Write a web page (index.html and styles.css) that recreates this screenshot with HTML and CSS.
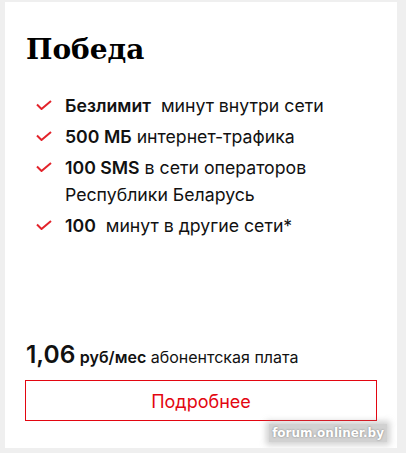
FILE: index.html
```html
<!DOCTYPE html>
<html lang="ru">
<head>
    <meta charset="UTF-8">
    <title>Победа</title>
    <link rel="stylesheet" href="styles.css">
</head>
<body>
    <div class="card">
        <h1>Победа</h1>

        <ul class="features">
            <li><svg class="check" viewBox="0 0 16 10"><path d="M1 4.5 L5.5 9 L15 1" /></svg><span><b>Безлимит</b>&nbsp; минут внутри сети</span></li>
            <li><svg class="check" viewBox="0 0 16 10"><path d="M1 4.5 L5.5 9 L15 1" /></svg><span><b>500 МБ</b> интернет-трафика</span></li>
            <li><svg class="check" viewBox="0 0 16 10"><path d="M1 4.5 L5.5 9 L15 1" /></svg><span><b>100 SMS</b> в сети операторов Республики Беларусь</span></li>
            <li><svg class="check" viewBox="0 0 16 10"><path d="M1 4.5 L5.5 9 L15 1" /></svg><span><b>100</b>&nbsp; минут в другие сети*</span></li>
        </ul>

        <div class="price">
            <span class="amount">1,06</span> <b>руб/мес</b> абонентская плата
        </div>
        <a class="more" href="#">Подробнее</a>

        <div class="watermark">forum.onliner.by</div>
    </div>
</body>
</html>
```

FILE: styles.css
```css
body {
    margin: 0;
    background: #efefef;
    font-family: Inter, "Noto Sans", sans-serif;
    color: #111;
}
.card {
    position: relative;
    box-sizing: border-box;
    width: 392px;
    height: 446px;
    margin: 2px 0 0 5px;
    background: #fff;
    padding: 28px 20px 0 20px;
    display: flex;
    flex-direction: column;
}
h1 {
    margin: 0 0 0 1px;
    font-family: "DejaVu Serif", serif;
    font-weight: bold;
    font-size: 28px;
    line-height: 40px;
    color: #000;
}
.features {
    list-style: none;
    margin: 22px 0 0 0;
    padding: 0;
}
.features li {
    display: flex;
    align-items: flex-start;
    font-size: 17.7px;
    line-height: 27px;
    margin-bottom: 4px;
}
.features b {
    font-weight: 600;
}
.check {
    flex: none;
    width: 16px;
    height: 10px;
    margin: 8px 13px 0 11px;
}
.check path {
    fill: none;
    stroke: #e3232b;
    stroke-width: 2;
}
.price {
    margin-top: auto;
    font-size: 16px;
    line-height: 30px;
    padding-left: 1px;
}
.price .amount {
    font-size: 24.5px;
    font-weight: 600;
}
.price b {
    font-weight: 600;
}
.more {
    display: block;
    margin: 8px 0 27px 0;
    height: 41px;
    line-height: 41px;
    border: 1px solid #e30611;
    box-sizing: border-box;
    text-align: center;
    color: #e30611;
    text-decoration: none;
    font-size: 18px;
}
.watermark {
    position: absolute;
    right: 10px;
    bottom: 6px;
    padding: 0 3px;
    font-family: "DejaVu Sans", sans-serif;
    font-weight: bold;
    font-size: 12px;
    line-height: 18px;
    color: #fff;
    background: rgba(140, 140, 140, 0.4);
    box-shadow: 0 0 6px 3px rgba(140, 140, 140, 0.4);
    text-shadow: 0 0 2px #777;
}
```
